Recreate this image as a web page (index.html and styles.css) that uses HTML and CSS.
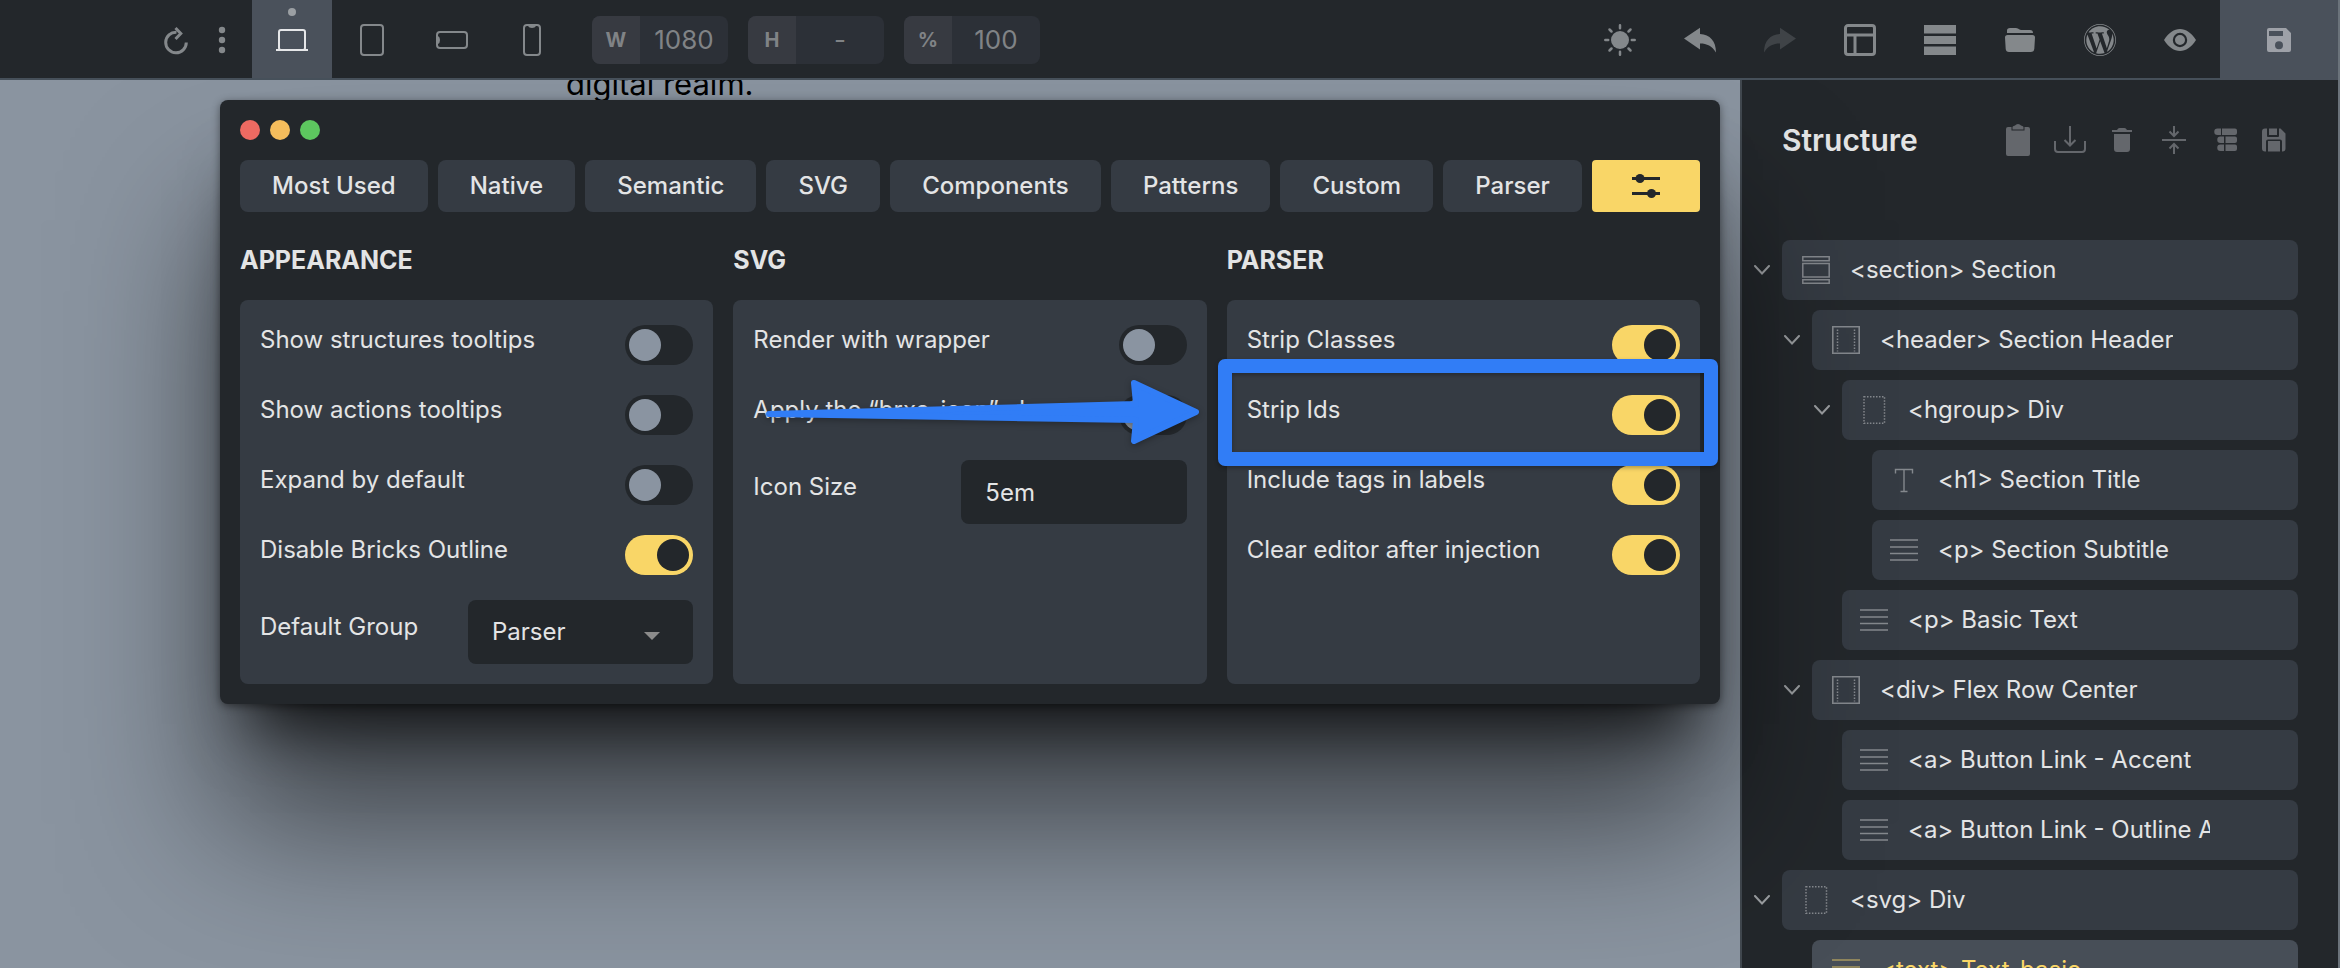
FILE: index.html
```
<!DOCTYPE html>
<html lang="en">
<head>
<meta charset="utf-8">
<title>Builder</title>
<link rel="stylesheet" href="styles.css">
</head>
<body>
<svg class="defs" aria-hidden="true">
  <symbol id="i-lines" viewBox="0 0 28 28"><path d="M0 4h28M0 11h28M0 17.500h28M0 24h28" fill="none" stroke="currentColor" stroke-width="1.700"/></symbol>
  <symbol id="i-section" viewBox="0 0 28 28"><path d="M.8.800h26.400v4H.8zM.8 7.500h26.400v13.500H.8zM.8 23.700h26.400v3.500H.8z" fill="none" stroke="currentColor" stroke-width="1.500"/></symbol>
  <symbol id="i-container" viewBox="0 0 28 28"><path d="M.8.800h26.400v26.400H.8z" fill="none" stroke="currentColor" stroke-width="1.600"/><path d="M5.500 3.500v22M22.500 3.500v22" fill="none" stroke="currentColor" stroke-width="1.500" stroke-dasharray="1.500 1.500"/></symbol>
  <symbol id="i-div" viewBox="0 0 28 28"><path d="M4 .8h20.500v26.400H4z" fill="none" stroke="currentColor" stroke-width="1.500" stroke-dasharray="1.500 1.500"/></symbol>
  <symbol id="i-title" viewBox="0 0 28 28"><path d="M5.500 7.500V3.500h17v4M14 3.500v22M10.500 25.500h7" fill="none" stroke="currentColor" stroke-width="1.400"/></symbol>
  <symbol id="i-chev" viewBox="0 0 16 10"><path d="M1 1l7 7.500L15 1" fill="none" stroke="currentColor" stroke-width="2" stroke-linecap="round"/></symbol>
</svg>

<header class="toolbar">
  <div class="tools-left">
    <button class="tool tool-reload" aria-label="Reload"><svg width="28" height="32" viewBox="0 0 28 32"><path d="M14.500 8.200A10.300 10.300 0 1 0 24.300 18.500" fill="none" stroke="currentColor" stroke-width="3"/><path d="M13.500 4L18.800 9.500 13.500 15" fill="none" stroke="currentColor" stroke-width="3"/></svg></button>
    <button class="tool tool-more" aria-label="More"><svg width="8" height="28" viewBox="0 0 8 28"><g fill="currentColor"><circle cx="4" cy="4" r="3.200"/><circle cx="4" cy="14" r="3.200"/><circle cx="4" cy="24" r="3.200"/></g></svg></button>
    <button class="tool tool-active" aria-label="Desktop"><svg width="32" height="32" viewBox="0 0 32 32"><rect x="3" y="6" width="26" height="20" rx="2" fill="none" stroke="currentColor" stroke-width="2"/><path d="M0 26h32" stroke="currentColor" stroke-width="2"/></svg></button>
    <button class="tool" aria-label="Tablet portrait"><svg width="32" height="32" viewBox="0 0 32 32"><rect x="5" y="1" width="22" height="30" rx="3" fill="none" stroke="currentColor" stroke-width="2"/></svg></button>
    <button class="tool" aria-label="Mobile landscape"><svg width="32" height="32" viewBox="0 0 32 32"><rect x="1" y="8" width="30" height="16" rx="3" fill="none" stroke="currentColor" stroke-width="2"/><path d="M1 12h1q2 1 2 4t-2 4H1z" fill="currentColor"/></svg></button>
    <button class="tool" aria-label="Mobile portrait"><svg width="32" height="32" viewBox="0 0 32 32"><rect x="8" y="1" width="16" height="30" rx="3" fill="none" stroke="currentColor" stroke-width="2"/><path d="M12 1v1q1 2 4 2t4-2V1z" fill="currentColor"/></svg></button>
    <div class="dims">
      <label class="dim"><span>W</span><input type="text" value="1080"></label>
      <label class="dim"><span>H</span><input type="text" value="-"></label>
      <label class="dim"><span>%</span><input type="text" value="100"></label>
    </div>
  </div>
  <div class="tools-right">
    <button class="tool" aria-label="Theme"><svg width="32" height="32" viewBox="0 0 32 32"><circle cx="16" cy="16" r="9" fill="currentColor"/><path d="M16 1.300v2.900M16 27.800v2.900M1.300 16h2.900M27.800 16h2.900M5.500 5.500l2 2M24.500 24.500l2 2M5.500 26.500l2-2M24.500 7.500l2-2" stroke="currentColor" stroke-width="2.500" stroke-linecap="round"/></svg></button>
    <button class="tool" aria-label="Undo"><svg width="32" height="32" viewBox="0 0 32 32"><path d="M0 14.500L16 3.800V10C26 10.500 32 17 32 28.500 28 22 23 19.500 16 19.500v6z" fill="currentColor"/></svg></button>
    <button class="tool tool-dim" aria-label="Redo"><svg width="32" height="32" viewBox="0 0 32 32"><path d="M32 14.500L16 3.800V10C6 10.500 0 17 0 28.500 4 22 9 19.500 16 19.500v6z" fill="currentColor"/></svg></button>
    <button class="tool" aria-label="Layout"><svg width="32" height="32" viewBox="0 0 32 32"><path d="M4 1.500h24a2.500 2.500 0 0 1 2.500 2.500v24a2.500 2.500 0 0 1-2.500 2.500H4A2.500 2.500 0 0 1 1.500 28V4A2.500 2.500 0 0 1 4 1.500zM1.500 11h29M11 11v19.500" fill="none" stroke="currentColor" stroke-width="3"/></svg></button>
    <button class="tool" aria-label="Rows"><svg width="32" height="32" viewBox="0 0 32 32"><path d="M0 1h32v8.500H0zM0 12h32v8H0zM0 22.500h32V31H0z" fill="currentColor"/></svg></button>
    <button class="tool" aria-label="Templates"><svg width="32" height="32" viewBox="0 0 32 32"><path d="M3 9V6.500Q3 4 6 4h6q2 0 3.500 1.500L17 6h9q3 0 3 3zM3.500 11h25Q31 11 31 13.500l-.7 11.500q-.3 3-3.300 3H5q-3 0-3.300-3L1 13.500Q1 11 3.500 11z" fill="currentColor"/></svg></button>
    <button class="tool" aria-label="WordPress"><svg width="32" height="32" viewBox="8 8 496 496"><path fill="currentColor" d="M61.700 169.400l101.500 278C92.200 413 43.300 340.200 43.300 256c0-30.900 6.600-60.100 18.400-86.600zm337.900 75.900c0-26.300-9.400-44.500-17.500-58.700-10.800-17.500-20.900-32.400-20.900-49.900 0-19.600 14.800-37.800 35.700-37.800.9 0 1.800.1 2.800.2-37.900-34.700-88.300-55.900-143.700-55.900-74.300 0-139.700 38.100-177.800 95.900 5 .2 9.700.3 13.700.3 22.200 0 56.700-2.700 56.700-2.700 11.500-.7 12.800 16.200 1.400 17.500 0 0-11.500 1.300-24.300 2l77.500 230.400L249.800 247l-33.100-90.800c-11.500-.7-22.300-2-22.300-2-11.500-.7-10.100-18.200 1.300-17.500 0 0 35.100 2.700 56 2.700 22.200 0 56.700-2.700 56.700-2.700 11.500-.7 12.800 16.200 1.400 17.500 0 0-11.500 1.300-24.300 2l76.900 228.700 21.200-70.900c9-29.400 16-50.500 16-68.700zm-139.900 29.300l-63.800 185.500c19.100 5.600 39.200 8.700 60.100 8.700 24.800 0 48.500-4.300 70.600-12.100-.6-.9-1.100-1.900-1.500-2.900l-65.400-179.200zm183-120.700c.9 6.800 1.400 14 1.400 21.900 0 21.600-4 45.800-16.200 76.200l-65 187.900C426.200 403 468.700 334.500 468.700 256c0-37-9.400-71.800-26-102.100zM504 256c0 136.800-111.300 248-248 248C119.200 504 8 392.700 8 256 8 119.200 119.200 8 256 8c136.700 0 248 111.200 248 248zm-11.400 0c0-130.500-106.200-236.600-236.600-236.600C125.500 19.400 19.400 125.500 19.400 256S125.600 492.600 256 492.600c130.500 0 236.600-106.100 236.600-236.600z"/></svg></button>
    <button class="tool" aria-label="Preview"><svg width="32" height="32" viewBox="0 0 32 32"><path fill-rule="evenodd" fill="currentColor" d="M0 16C5 8.500 10 5 16 5s11 3.500 16 11c-5 7.500-10 11-16 11S5 23.500 0 16zm16-7.200a7.200 7.200 0 1 0 0 14.400 7.200 7.200 0 0 0 0-14.400zm0 2.200a5 5 0 1 1 0 10 5 5 0 0 1 0-10z"/></svg></button>
    <button class="tool tool-save" aria-label="Save"><svg width="24" height="24" viewBox="0 0 24 24"><path fill-rule="evenodd" fill="currentColor" d="M2 0h17l5 5v17a2 2 0 0 1-2 2H2a2 2 0 0 1-2-2V2a2 2 0 0 1 2-2zm0 3v5h14V3zm10 10.200a4 4 0 1 0 0 8 4 4 0 0 0 0-8z"/></svg></button>
  </div>
</header>

<main class="workspace">
  <section class="canvas"><p class="page-text">digital realm.</p></section>

  <aside class="sidebar">
    <div class="side-head">
      <h2>Structure</h2>
      <div class="side-actions">
        <button aria-label="Paste"><svg width="24" height="32" viewBox="0 0 24 32"><path fill="currentColor" d="M2 3h3.500v3.500h13V3H22a2 2 0 0 1 2 2v25a2 2 0 0 1-2 2H2a2 2 0 0 1-2-2V5a2 2 0 0 1 2-2zM6.500 5.500V3Q6.500 2 9 1.500 10 0 12 0t3 1.500q2.500.5 2.500 1.500v2.500z"/></svg></button>
        <button aria-label="Import"><svg width="32" height="28" viewBox="0 0 32 28"><path d="M1 15v8q0 3 3 3h24q3 0 3-3v-8M16 0v19M10.500 14l5.500 5.500 5.500-5.500" fill="none" stroke="currentColor" stroke-width="2"/></svg></button>
        <button aria-label="Delete"><svg width="20" height="24" viewBox="0 0 20 24"><path fill="currentColor" d="M0 2h5Q6 0 7.500 0h5Q14 0 15 2h5v2H0zM2 6h16v15q0 3-3 3H5q-3 0-3-3z"/></svg></button>
        <button aria-label="Collapse"><svg width="24" height="28" viewBox="0 0 24 28"><path d="M0 14h24M12 0v9.500M7.500 5.500l4.500 4.500 4.500-4.500M12 28v-9.500M7.500 22.500l4.500-4.500 4.500 4.500" fill="none" stroke="currentColor" stroke-width="2"/></svg></button>
        <button aria-label="Tree"><svg width="24" height="24" viewBox="0 0 24 24"><path fill="currentColor" d="M3.500.5H7v6.500H3.500a3.200 3.200 0 0 1 0-6.500zM8 .5h13q2 0 2 2v2.500q0 2-2 2H8zM6.500 8.500H10v6.500H6.500a3.200 3.200 0 0 1 0-6.500zM11.500 8.500H21q2 0 2 2V13q0 2-2 2h-9.500zM6.500 16.500H10V23H6.500a3.200 3.200 0 0 1 0-6.500zM11.500 16.500H21q2 0 2 2V21q0 2-2 2h-9.500z"/></svg></button>
        <button aria-label="Save"><svg width="24" height="24" viewBox="0 0 24 24"><path fill="currentColor" d="M3 .5h2V8q0 1 1 1h10q1 0 1-1V.5h1.500l5 5V20.500q0 3-3 3h-.5V13.500q0-2-2-2H6q-2 0-2 2v10H3q-3 0-3-3V3.500Q0 .5 3 .5zM7 .5h8V7H7zM6 13h12v10.500H6z"/></svg></button>
      </div>
    </div>
    <ul class="tree">
      <li class="node"><svg class="chev"><use href="#i-chev"/></svg><div class="card"><svg class="ico"><use href="#i-section"/></svg><span>&lt;section&gt; Section</span></div></li>
      <li class="node l1"><svg class="chev"><use href="#i-chev"/></svg><div class="card"><svg class="ico"><use href="#i-container"/></svg><span>&lt;header&gt; Section Header</span></div></li>
      <li class="node l2"><svg class="chev"><use href="#i-chev"/></svg><div class="card"><svg class="ico"><use href="#i-div"/></svg><span>&lt;hgroup&gt; Div</span></div></li>
      <li class="node l3"><div class="card"><svg class="ico"><use href="#i-title"/></svg><span>&lt;h1&gt; Section Title</span></div></li>
      <li class="node l3"><div class="card"><svg class="ico"><use href="#i-lines"/></svg><span>&lt;p&gt; Section Subtitle</span></div></li>
      <li class="node l2"><div class="card"><svg class="ico"><use href="#i-lines"/></svg><span>&lt;p&gt; Basic Text</span></div></li>
      <li class="node l1"><svg class="chev"><use href="#i-chev"/></svg><div class="card"><svg class="ico"><use href="#i-container"/></svg><span>&lt;div&gt; Flex Row Center</span></div></li>
      <li class="node l2"><div class="card"><svg class="ico"><use href="#i-lines"/></svg><span>&lt;a&gt; Button Link - Accent</span></div></li>
      <li class="node l2"><div class="card"><svg class="ico"><use href="#i-lines"/></svg><span>&lt;a&gt; Button Link - Outline Accent</span></div></li>
      <li class="node"><svg class="chev"><use href="#i-chev"/></svg><div class="card"><svg class="ico"><use href="#i-div"/></svg><span>&lt;svg&gt; Div</span></div></li>
      <li class="node l1 selected"><div class="card"><svg class="ico"><use href="#i-lines"/></svg><span>&lt;text&gt; Text-basic</span></div></li>
    </ul>
  </aside>

  <section class="window">
    <div class="dots"><i class="red"></i><i class="amber"></i><i class="green"></i></div>
    <nav class="tabs">
      <button>Most Used</button><button>Native</button><button>Semantic</button><button>SVG</button><button>Components</button><button>Patterns</button><button>Custom</button><button>Parser</button>
      <button class="tab-settings" aria-label="Settings"><svg width="28" height="28" viewBox="0 0 28 28"><path d="M0 6.500h28M0 21.500h28" stroke="currentColor" stroke-width="3"/><circle cx="8" cy="6.500" r="4.500" fill="currentColor"/><circle cx="19.500" cy="21.500" r="4.500" fill="currentColor"/></svg></button>
    </nav>
    <div class="groups">
      <section class="group">
        <h3>APPEARANCE</h3>
        <div class="panel">
          <div class="row"><label for="a1">Show structures tooltips</label><input type="checkbox" id="a1"></div>
          <div class="row"><label for="a2">Show actions tooltips</label><input type="checkbox" id="a2"></div>
          <div class="row"><label for="a3">Expand by default</label><input type="checkbox" id="a3"></div>
          <div class="row"><label for="a4">Disable Bricks Outline</label><input type="checkbox" id="a4" checked></div>
          <div class="row"><label for="a5">Default Group</label><div class="field field-select"><select id="a5"><option>Parser</option></select></div></div>
        </div>
      </section>
      <section class="group">
        <h3>SVG</h3>
        <div class="panel">
          <div class="row"><label for="s1">Render with wrapper</label><input type="checkbox" id="s1"></div>
          <div class="row"><label for="s2">Apply the “brxe-icon” class</label><input type="checkbox" id="s2">
            <svg class="arrow" width="440" height="74" viewBox="0 0 440 74"><path d="M9 39L376 29 374 8 436 37 374 66 376 45z" fill="#317df6" stroke="#317df6" stroke-width="6" stroke-linejoin="round"/></svg>
          </div>
          <div class="row"><label for="s3">Icon Size</label><div class="field"><input type="text" id="s3" value="5em"></div></div>
        </div>
      </section>
      <section class="group">
        <h3>PARSER</h3>
        <div class="panel">
          <div class="row"><label for="p1">Strip Classes</label><input type="checkbox" id="p1" checked></div>
          <div class="row"><label for="p2">Strip Ids</label><input type="checkbox" id="p2" checked><div class="marker"></div></div>
          <div class="row"><label for="p3">Include tags in labels</label><input type="checkbox" id="p3" checked></div>
          <div class="row"><label for="p4">Clear editor after injection</label><input type="checkbox" id="p4" checked></div>
        </div>
      </section>
    </div>
  </section>
</main>
</body>
</html>
```
FILE: styles.css
```
:root {
  --bg: #23272b;
  --card: #353b43;
  --raised: #4a515b;
  --text: #e3e4e5;
  --muted: #84888b;
  --yellow: #f9d667;
  --blue: #317df6;
}
* { box-sizing: border-box; }
body {
  margin: 0;
  height: 100vh;
  display: flex;
  flex-direction: column;
  overflow: hidden;
  background: #6b737b;
  color: var(--text);
  font-family: Inter, "Liberation Sans", sans-serif;
  font-size: 24px;
  line-height: 32px;
}
button, input, select { font: inherit; color: inherit; border: 0; margin: 0; padding: 0; background: none; }
h2, h3, p, ul { margin: 0; padding: 0; }
.defs { display: none; }

.toolbar {
  flex: none;
  height: 80px;
  margin-right: 2px;
  display: flex;
  justify-content: space-between;
  background: var(--bg);
  border-bottom: 2px solid #46505a;
  position: relative;
  z-index: 2;
}
.tools-left, .tools-right { display: flex; }
.tools-left { padding-left: 152px; }
.tool {
  width: 80px;
  display: flex;
  align-items: center;
  justify-content: center;
  color: var(--muted);
  padding-top: 2px;
  position: relative;
}
.tool-reload { width: 48px; }
.tool-more { width: 52px; padding-right: 8px; }
.tool-active { background: var(--raised); color: #e6e7e9; }
.tool-active::before {
  content: "";
  position: absolute;
  top: 8px;
  left: 36px;
  width: 8px;
  height: 8px;
  border-radius: 50%;
  background: #9b9fa3;
}
.tool-dim { color: #3f4347; }
.tool-save { width: 118px; margin-bottom: -2px; background: var(--raised); color: #9ea1a8; padding-top: 0; }

.dims { display: flex; gap: 20px; padding: 16px 0 14px 20px; }
.dim { display: flex; width: 136px; border-radius: 8px; overflow: hidden; background: #2c3037; color: #808386; }
.dim span {
  flex: none;
  width: 48px;
  display: grid;
  place-items: center;
  background: #373a41;
  font-size: 20px;
  font-weight: 700;
}
.dim input { width: 88px; text-align: center; font-size: 26px; }

.workspace { flex: 1; min-height: 0; display: flex; position: relative; }
.canvas { flex: 1; background: #8a94a0; color: #000; }
.page-text { padding: 0 0 0 566px; font-size: 31px; line-height: 8px; }

.sidebar {
  flex: none;
  width: 600px;
  padding: 40px 40px 0;
  background: var(--bg);
  border-left: 2px solid #41484f;
  border-right: 2px solid #6b737b;
}
.side-head { display: flex; justify-content: space-between; align-items: center; height: 40px; padding-right: 2px; margin-bottom: 80px; }
.side-head h2 { font-size: 30px; font-weight: 600; }
.side-actions { display: flex; align-items: center; color: #64676c; }
.side-actions button { width: 52px; display: flex; justify-content: center; color: inherit; }
.side-actions button:last-child { width: 44px; }

.tree { list-style: none; display: flex; flex-direction: column; gap: 10px; }
.node { position: relative; }
.l1 { margin-left: 30px; }
.l2 { margin-left: 60px; }
.l3 { margin-left: 90px; }
.chev { position: absolute; left: -28px; top: 25px; width: 16px; height: 10px; color: #9a9da0; }
.card {
  height: 60px;
  padding: 0 88px 0 20px;
  display: flex;
  align-items: center;
  gap: 20px;
  background: var(--card);
  border-radius: 8px;
}
.l2 .card, .l3 .card { padding-left: 18px; }
.card span { overflow: hidden; white-space: nowrap; }
.ico { flex: none; width: 28px; height: 28px; color: #84888d; }
.selected .card { background: #474e57; color: var(--yellow); }
.selected .ico { color: #a8985f; }

.window {
  position: absolute;
  top: 20px;
  left: 220px;
  right: 620px;
  padding: 20px;
  background: var(--bg);
  border-radius: 8px;
  box-shadow: 0 2px 8px rgba(0, 0, 0, .45), 0 50px 60px -30px rgba(0, 0, 0, .75), 0 120px 150px rgba(0, 0, 0, .55);
}
.dots { display: flex; gap: 10px; margin-bottom: 20px; }
.dots i { width: 20px; height: 20px; border-radius: 50%; }
.red { background: #ee6a62; }
.amber { background: #f5bd5c; }
.green { background: #5dc75f; }

.tabs { display: flex; gap: 10px; margin-bottom: 32px; }
.tabs button {
  flex: 1 1 auto;
  height: 52px;
  padding: 0 30px;
  border-radius: 8px;
  background: var(--card);
  font-weight: 500;
  text-align: center;
}
.tabs .tab-settings { display: flex; align-items: center; justify-content: center; padding: 0 38px; background: var(--yellow); color: var(--bg); border-radius: 4px; }

.groups { display: grid; grid-template-columns: repeat(3, 1fr); gap: 20px; }
.group { display: flex; flex-direction: column; }
.group h3 { font-size: 25px; line-height: 32px; font-weight: 700; margin-bottom: 24px; }
.panel { flex: 1; padding: 10px 20px; background: var(--card); border-radius: 8px; }
.row { min-height: 70px; padding: 10px 0; display: flex; align-items: center; justify-content: space-between; position: relative; }
.row label { padding-bottom: 10px; white-space: nowrap; }
.row input[type="checkbox"] {
  appearance: none;
  flex: none;
  width: 68px;
  height: 40px;
  padding: 4px;
  display: flex;
  border-radius: 20px;
  background: var(--bg);
}
.row input[type="checkbox"]::before { content: ""; width: 32px; height: 32px; border-radius: 50%; background: #8a94a1; }
.row input[type="checkbox"]:checked { background: var(--yellow); justify-content: flex-end; }
.row input[type="checkbox"]:checked::before { background: var(--bg); }
.field { width: 52%; position: relative; }
.field input, .field select {
  appearance: none;
  display: block;
  width: 100%;
  height: 64px;
  padding: 0 24px;
  border-radius: 8px;
  background: var(--bg);
}
.field-select::after {
  content: "";
  position: absolute;
  right: 33px;
  top: 32px;
  border: 8px solid transparent;
  border-top-color: #8b8b8b;
  border-bottom: 0;
}
.arrow { position: absolute; right: -13px; top: -5px; filter: drop-shadow(0 2px 3px rgba(0, 0, 0, .3)); z-index: 1; }
.marker {
  position: absolute;
  inset: -21px -38px -16px -29px;
  border: 14px solid var(--blue);
  border-radius: 7px;
  box-shadow: 0 2px 4px rgba(0, 0, 0, .3), inset 0 2px 4px rgba(0, 0, 0, .3);
  pointer-events: none;
  z-index: 1;
}
```
